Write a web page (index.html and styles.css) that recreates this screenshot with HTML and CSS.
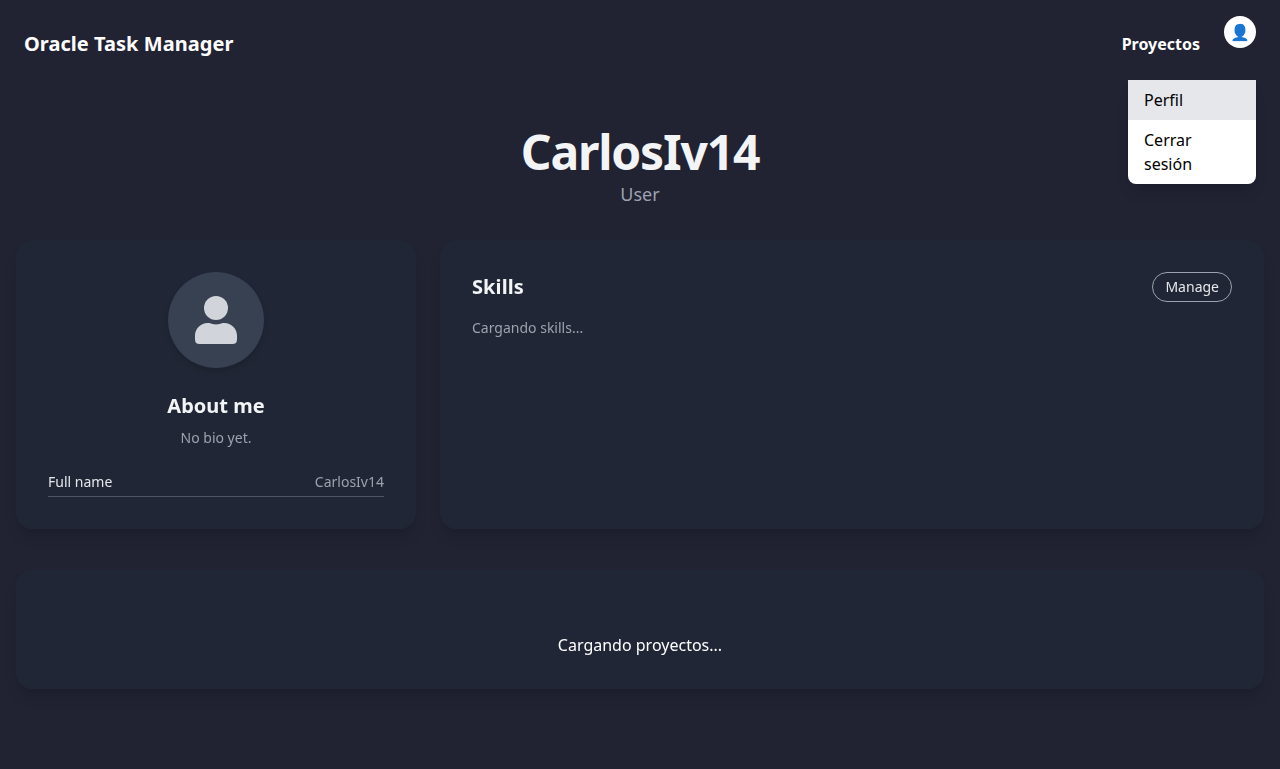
FILE: index.html
```html
<!DOCTYPE html>
<html lang="es">
<head>
<meta charset="utf-8">
<title>Oracle Task Manager</title>
<link rel="stylesheet" href="styles.css">
</head>
<body>
<nav class="navbar">
  <div class="brand">Oracle Task Manager</div>
  <div class="nav-right">
    <a class="nav-link">Proyectos</a>
    <div class="account">
      <button class="account-button">👤</button>
      <div class="menu">
        <a class="menu-item active">Perfil</a>
        <a class="menu-item">Cerrar sesión</a>
      </div>
    </div>
  </div>
</nav>
<main class="page">
  <header class="hero">
    <h1>CarlosIv14</h1>
    <p>User</p>
  </header>
  <div class="grid">
    <section class="card about">
      <div class="avatar">
        <svg viewBox="0 0 48 48" width="48" height="48"><circle cx="24" cy="12" r="12"/><path d="M15.750 27H17.320C21.300 28.900 26.700 28.900 30.680 27H32.250C39.300 27 45 32.550 45 39.600V43.500Q45 48 40.500 48H7.500Q3 48 3 43.500V39.600C3 32.550 8.700 27 15.750 27Z"/></svg>
      </div>
      <h2>About me</h2>
      <p class="bio">No bio yet.</p>
      <dl class="info"><dt>Full name</dt><dd>CarlosIv14</dd></dl>
    </section>
    <section class="card">
      <div class="skills-head"><h2>Skills</h2><button class="manage">Manage</button></div>
      <p class="muted">Cargando skills...</p>
    </section>
  </div>
  <section class="card projects"><p>Cargando proyectos...</p></section>
</main>
</body>
</html>
```
FILE: styles.css
```css
* { box-sizing: border-box; margin: 0; padding: 0; }
body { min-height: 100vh; background: #212232; color: #fff; font: 16px/24px "Noto Sans", sans-serif; overflow: hidden; }
button { font: inherit; border: 0; }
.navbar { position: relative; z-index: 2; display: flex; justify-content: space-between; align-items: center; height: 88px; padding: 16px 24px; }
.brand { font-size: 20px; line-height: 28px; font-weight: 700; letter-spacing: 0.04px; }
.nav-right { display: flex; align-items: center; gap: 24px; }
.nav-link { font-weight: 700; }
.account { position: relative; height: 56px; }
.account-button { display: flex; align-items: center; justify-content: center; width: 32px; height: 32px; border-radius: 50%; background: #fff; color: #000; }
.menu { position: absolute; right: 0; top: 64px; width: 128px; background: #fff; color: #000; border-radius: 0 0 8px 8px; overflow: hidden; box-shadow: 0 10px 15px -3px rgba(0,0,0,.1), 0 4px 6px -2px rgba(0,0,0,.05); }
.menu-item { display: block; padding: 8px 16px; }
.menu-item.active { background: #e5e7eb; }
.page { padding: 40px 16px; }
.hero { text-align: center; margin-bottom: 32px; color: #f3f4f6; }
.hero h1 { font-size: 48px; line-height: 48px; font-weight: 700; letter-spacing: -1.2px; }
.hero p { margin-top: 4px; font-size: 18px; line-height: 28px; color: #9ca3af; }
.grid { display: grid; grid-template-columns: 400px 1fr; gap: 24px; }
.card { padding: 32px; border-radius: 16px; background: rgba(31,41,55,.6); backdrop-filter: blur(4px); box-shadow: 0 10px 15px -3px rgba(0,0,0,.1), 0 4px 6px -2px rgba(0,0,0,.05); }
h2 { font-size: 20px; line-height: 28px; font-weight: 700; color: #f3f4f6; }
.about { text-align: center; }
.avatar { display: flex; align-items: center; justify-content: center; width: 96px; height: 96px; margin: 0 auto 24px; border-radius: 50%; background: #374151; box-shadow: 0 4px 6px -1px rgba(0,0,0,.1), 0 2px 4px -1px rgba(0,0,0,.06); }
.avatar svg { fill: #d1d5db; }
.bio, .muted { font-size: 14px; line-height: 20px; color: #9ca3af; }
.bio { margin-top: 8px; }
.info { display: flex; justify-content: space-between; margin-top: 24px; padding-bottom: 4px; border-bottom: 1px solid #4b5563; font-size: 14px; line-height: 20px; color: #e5e7eb; }
.info dd { color: #9ca3af; }
.skills-head { display: flex; justify-content: space-between; align-items: center; margin-bottom: 16px; }
.skills-head h2 { letter-spacing: 0.1px; }
.manage { padding: 4px 12px; border: 1px solid #9ca3af; border-radius: 15px; background: transparent; color: #e5e7eb; font-size: 14px; line-height: 20px; }
.projects { margin-top: 40px; height: 120px; padding-top: 64px; text-align: center; }
```
